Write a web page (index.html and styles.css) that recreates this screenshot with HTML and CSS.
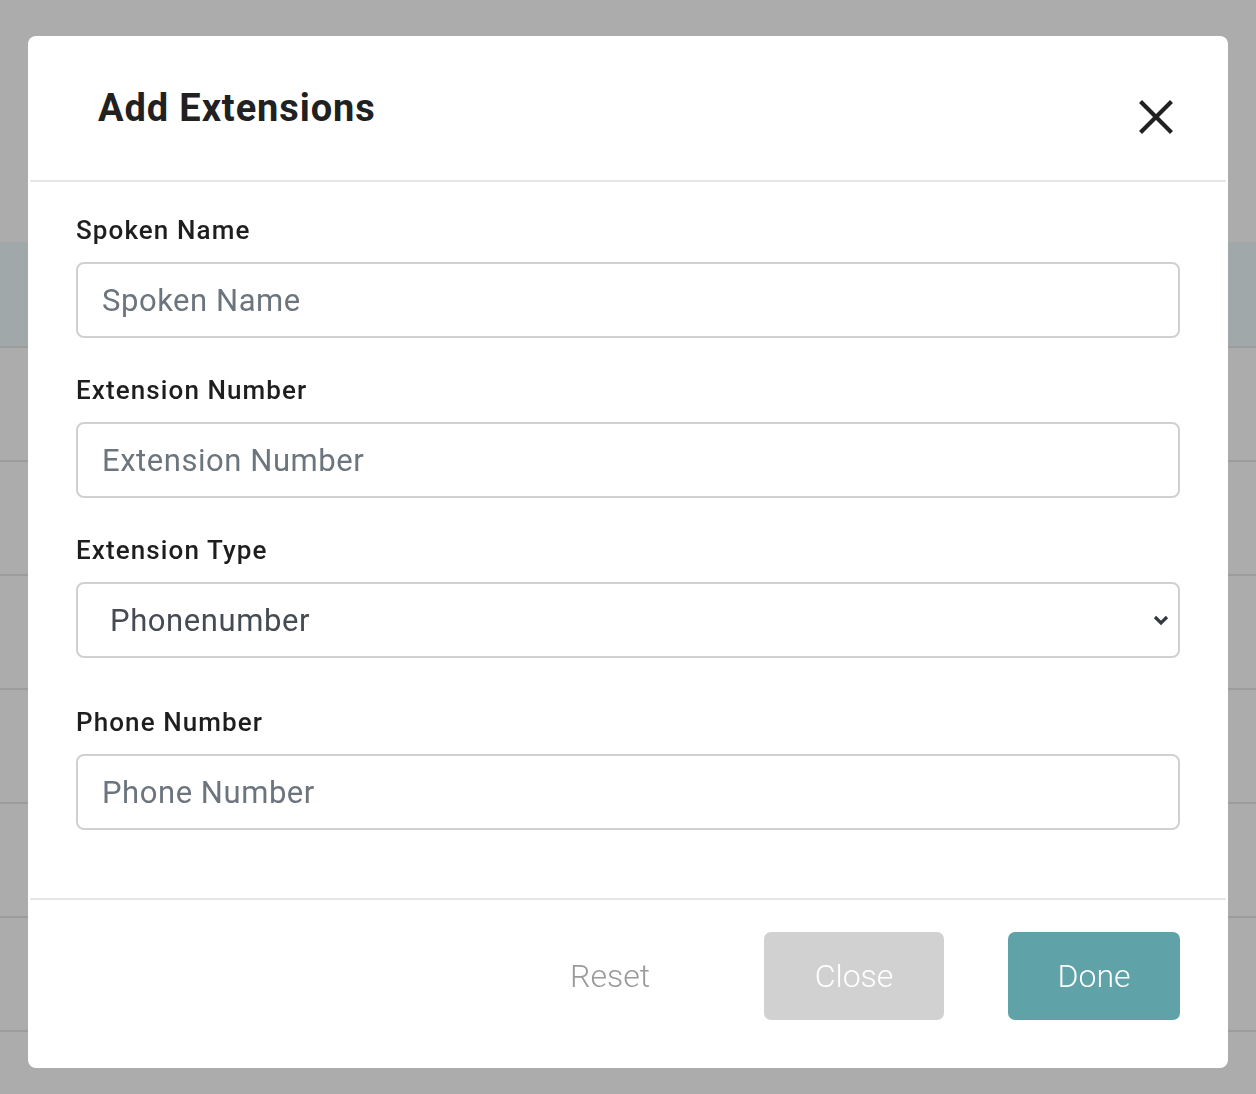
FILE: index.html
```html
<!DOCTYPE html>
<html lang="en">
<head>
<meta charset="utf-8">
<title>Add Extensions</title>
<link rel="stylesheet" href="styles.css">
</head>
<body>
<div class="backdrop">
  <div class="bg-top"></div>
  <div class="bg-band"></div>
  <div class="bg-row"></div>
  <div class="bg-row"></div>
  <div class="bg-row"></div>
  <div class="bg-row"></div>
  <div class="bg-row"></div>
  <div class="bg-row"></div>
  <div class="bg-row"></div>
</div>
<div class="modal">
  <div class="modal-header">
    <h1 class="modal-title">Add Extensions</h1>
    <button class="close-x" aria-label="Close">
      <svg width="34" height="34" viewBox="0 0 34 34"><path d="M3 3 L31 31 M31 3 L3 31" stroke="#212121" stroke-width="4.2" stroke-linecap="square" fill="none"/></svg>
    </button>
  </div>
  <div class="divider"></div>
  <div class="modal-body">
    <div class="field">
      <label class="label">Spoken Name</label>
      <input class="input" type="text" placeholder="Spoken Name">
    </div>
    <div class="field">
      <label class="label">Extension Number</label>
      <input class="input" type="text" placeholder="Extension Number">
    </div>
    <div class="field field-select">
      <label class="label">Extension Type</label>
      <div class="select">
        <span class="select-value">Phonenumber</span>
        <svg class="chevron" width="16" height="12" viewBox="0 0 16 12"><path d="M2 3 L8 9 L14 3" stroke="#343a40" stroke-width="3.2" fill="none"/></svg>
      </div>
    </div>
    <div class="field">
      <label class="label">Phone Number</label>
      <input class="input" type="text" placeholder="Phone Number">
    </div>
  </div>
  <div class="divider"></div>
  <div class="modal-footer">
    <button class="btn btn-reset">Reset</button>
    <button class="btn btn-close">Close</button>
    <button class="btn btn-done">Done</button>
  </div>
</div>
</body>
</html>
```

FILE: styles.css
```css
* { box-sizing: border-box; }
html, body { margin: 0; padding: 0; }
body {
  background: #acacac;
  font-family: Roboto, "Liberation Sans", Arial, sans-serif;
  width: 1256px;
  height: 1094px;
  overflow: hidden;
}
.backdrop {
  display: flex;
  flex-direction: column;
}
.bg-top { height: 242px; }
.bg-band { height: 104px; background: #a0a8aa; }
.bg-row { height: 114px; border-top: 2px solid #9c9c9c; }

.modal {
  position: fixed;
  left: 28px;
  top: 36px;
  width: 1200px;
  height: 1032px;
  background: #fff;
  border-radius: 8px;
  display: flex;
  flex-direction: column;
}
.modal-header {
  height: 144px;
  display: flex;
  align-items: flex-start;
  justify-content: space-between;
  padding: 0 55px 0 70px;
}
.modal-title {
  margin: 50px 0 0;
  font-size: 38px;
  font-weight: 700;
  color: #212121;
  line-height: 44px;
  letter-spacing: 0.9px;
}
.close-x {
  margin-top: 64px;
  background: none;
  border: 0;
  padding: 0;
  width: 34px;
  height: 34px;
  display: flex;
}
.divider {
  height: 2px;
  margin: 0 2px;
  background: #e6e6e6;
}
.modal-body {
  padding: 34px 48px 0;
  height: 716px;
  display: flex;
  flex-direction: column;
  gap: 38px;
}
.field { display: flex; flex-direction: column; gap: 18px; }
.field-select { margin-bottom: 12px; }
.label {
  font-size: 26px;
  font-weight: 500;
  line-height: 28px;
  color: #1e1e1e;
  letter-spacing: 1.1px;
}
.input {
  height: 76px;
  border: 2px solid #d0d0d0;
  border-radius: 8px;
  padding: 0 24px;
  font-family: Roboto, "Liberation Sans", Arial, sans-serif;
  font-size: 31px;
  letter-spacing: 0.55px;
  color: #495057;
  outline: none;
}
.input::placeholder { color: #6c757d; }
.select {
  height: 76px;
  border: 2px solid #d0d0d0;
  border-radius: 8px;
  padding: 0 9px 0 32px;
  display: flex;
  align-items: center;
  justify-content: space-between;
}
.select-value {
  font-size: 31px;
  letter-spacing: 0.6px;
  color: #454b52;
}

.modal-footer {
  padding: 32px 48px 48px;
  display: flex;
  justify-content: flex-end;
  gap: 64px;
}
.btn {
  height: 88px;
  border: 0;
  border-radius: 7px;
  padding: 0 50px;
  font-family: Roboto, "Liberation Sans", Arial, sans-serif;
  font-size: 32px;
  font-weight: 300;
  color: #fff;
}
.btn-reset { background: transparent; color: #9a9a9a; }
.btn-close { background: #d1d1d1; width: 180px; padding: 0; }
.btn-done { background: #5fa2a7; width: 172px; padding: 0; }
```
